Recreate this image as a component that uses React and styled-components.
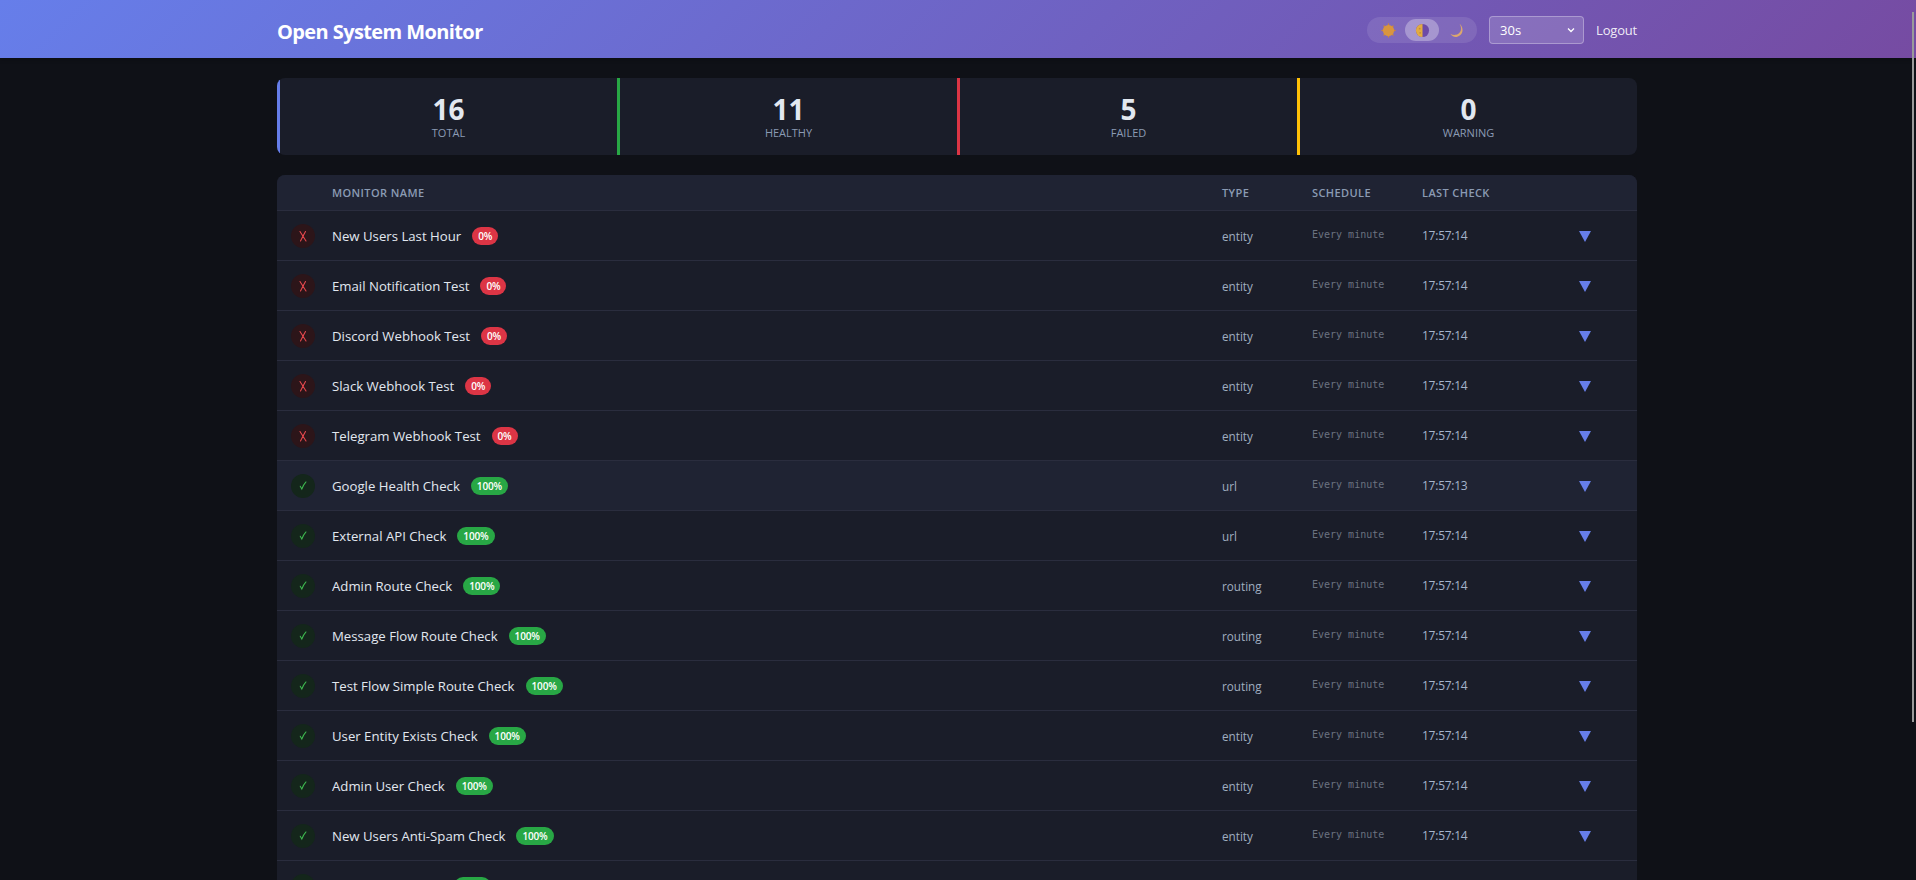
import React from 'react';
import styled, { createGlobalStyle } from 'styled-components';

const GlobalStyle = createGlobalStyle`
  html, body {
    margin: 0;
    padding: 0;
    height: 880px;
    overflow: hidden;
    background: #0f1117;
  }
  body {
    font-family: "Open Sans", "Noto Sans", "Liberation Sans", sans-serif;
    color: #e2e8f0;
  }
`;

const Header = styled.header`
  height: 58px;
  background: linear-gradient(135deg, #667eea 0%, #764ba2 100%);
  box-shadow: 0 2px 4px rgba(0, 0, 0, 0.2);
`;

const HeaderInner = styled.div`
  height: 100%;
  margin: 0 279px 0 277px;
  display: flex;
  align-items: center;
  justify-content: space-between;
`;

const Title = styled.h1`
  margin: 4px 0 0;
  font-size: 20px;
  font-weight: 700;
  letter-spacing: -0.6px;
  color: #fff;
`;

const HeaderControls = styled.div`
  display: flex;
  align-items: center;
  padding-top: 2px;
`;

const ThemeSwitch = styled.div`
  width: 110px;
  height: 26px;
  border-radius: 13px;
  background: rgba(255, 255, 255, 0.1);
  display: flex;
  align-items: center;
  justify-content: space-between;
  padding: 0 4px;
  box-sizing: border-box;
  margin-right: 12px;
`;

const ThemeOption = styled.span`
  width: 35px;
  height: 22px;
  border-radius: 11px;
  display: flex;
  align-items: center;
  justify-content: center;
  background: ${(p) => (p.$active ? 'rgba(255, 255, 255, 0.3)' : 'transparent')};
`;

const RefreshSelect = styled.div`
  width: 95px;
  height: 28px;
  box-sizing: border-box;
  border: 1px solid rgba(255, 255, 255, 0.3);
  border-radius: 4px;
  background: rgba(255, 255, 255, 0.15);
  display: flex;
  align-items: center;
  justify-content: space-between;
  padding: 0 7px 0 10px;
  font-size: 13px;
  color: #fff;
  margin-right: 12px;
`;

const LogoutLink = styled.span`
  font-size: 13px;
  letter-spacing: -0.2px;
  color: rgba(255, 255, 255, 0.9);
`;

const Main = styled.main`
  margin: 0 279px 0 277px;
  padding-top: 20px;
`;

const StatsBar = styled.section`
  height: 77px;
  display: grid;
  grid-template-columns: repeat(4, 1fr);
  background: #1a1d29;
  border-radius: 8px;
  overflow: hidden;
  margin-bottom: 20px;
`;

const StatCard = styled.div`
  border-left: 3px solid ${(p) => p.$color};
  display: flex;
  flex-direction: column;
  align-items: center;
  justify-content: center;
`;

const StatValue = styled.div`
  font-size: 28px;
  font-weight: 700;
  line-height: 32px;
  color: #e2e8f0;
`;

const StatLabel = styled.div`
  font-size: 11px;
  line-height: 15px;
  color: #8b9bb4;
  text-transform: uppercase;
`;

const Table = styled.section`
  background: #1a1d29;
  border-radius: 8px 8px 0 0;
  overflow: hidden;
`;

const columns = '55px 890px 90px 110px 1fr';

const TableHead = styled.div`
  height: 35px;
  display: grid;
  grid-template-columns: ${columns};
  align-items: center;
  background: #1f2333;
  border-bottom: 1px solid #2a2d3e;
  font-size: 11px;
  font-weight: 600;
  color: #8b9bb4;
  text-transform: uppercase;
  letter-spacing: 0.4px;
`;

const Row = styled.div`
  height: 49px;
  display: grid;
  grid-template-columns: ${columns};
  align-items: center;
  background: ${(p) => (p.$hover ? '#1f2333' : 'transparent')};
  border-bottom: 1px solid #2a2d3e;
  font-size: 13.2px;
`;

const StatusIcon = styled.span`
  margin-left: 14px;
  width: 24px;
  height: 24px;
  border-radius: 50%;
  display: flex;
  align-items: center;
  justify-content: center;
  color: ${(p) => (p.$ok ? '#3fb950' : '#e5484d')};
  background: ${(p) => (p.$ok ? '#14261b' : '#2c1519')};
`;

const NameCell = styled.div`
  display: flex;
  align-items: center;
  gap: 11px;
  color: #e2e8f0;
`;

const Badge = styled.span`
  height: 18px;
  padding: 0 6px;
  border-radius: 9px;
  display: inline-flex;
  align-items: center;
  font-size: 10px;
  font-weight: 600;
  letter-spacing: -0.15px;
  color: #fff;
  background: ${(p) => (p.$ok ? '#28a745' : '#dc3545')};
`;

const TypeCell = styled.div`
  font-size: 11.7px;
  color: #a0aec0;
`;

const ScheduleCell = styled.div`
  font-family: "DejaVu Sans Mono", "Liberation Mono", monospace;
  font-size: 10px;
  color: #6b7280;
  margin-top: -2px;
`;

const CheckCell = styled.div`
  position: relative;
  font-size: 12px;
  letter-spacing: -0.25px;
  color: #a5b4cc;
`;

const ExpandArrow = styled.span`
  position: absolute;
  left: 157px;
  top: 4px;
  width: 0;
  height: 0;
  border-left: 6px solid transparent;
  border-right: 6px solid transparent;
  border-top: 11px solid #667eea;
`;

const ScrollThumb = styled.div`
  position: fixed;
  top: 12px;
  right: 2px;
  width: 2px;
  height: 710px;
  background: #9a9a9a;
`;

const CrossIcon = () => (
  <svg width="12" height="14" viewBox="0 0 12 14">
    <path d="M3 2.500c2 3 4 6.500 6 9.500M8.500 2.500C6.800 5.500 5 9 3.500 12" fill="none" stroke="currentColor" strokeWidth="1.1" strokeLinecap="round" />
  </svg>
);

const CheckIcon = () => (
  <svg width="10" height="11" viewBox="0 0 12 14">
    <path d="M2.500 8 4.500 11.500C5.800 8 7.500 5 9.800 2.500" fill="none" stroke="currentColor" strokeWidth="1.3" strokeLinecap="round" />
  </svg>
);

const SunIcon = () => (
  <svg width="15" height="15" viewBox="0 0 16 16">
    <g stroke="#c9853c" strokeWidth="1.4" strokeLinecap="round">
      {[0, 45, 90, 135, 180, 225, 270, 315].map((a) => (
        <line key={a} x1="8" y1="1" x2="8" y2="3" transform={`rotate(${a} 8 8)`} />
      ))}
    </g>
    <circle cx="8" cy="8" r="6" fill="#d9953f" />
  </svg>
);

const HalfMoonIcon = () => (
  <svg width="15" height="15" viewBox="0 0 16 16">
    <circle cx="8" cy="8" r="7" fill="#6d4aa8" />
    <path d="M8 1a7 7 0 0 0 0 14z" fill="#e2ab42" />
    <circle cx="5" cy="6" r="1" fill="#c58d33" />
    <circle cx="5.500" cy="10.500" r="0.9" fill="#c58d33" />
  </svg>
);

const CrescentIcon = () => (
  <svg width="15" height="15" viewBox="0 0 16 16">
    <path d="M11.500 1.200c3 4.600 1 10.600-4.600 11.400-2 .3-3.900-.2-5.400-1.200 1.200 2.400 3.800 3.800 6.600 3.400 4.400-.6 7-4.400 6.200-8.600-.4-2.200-1.300-3.800-2.800-5z" fill="#dca76d" />
  </svg>
);

const Chevron = () => (
  <svg width="10" height="10" viewBox="0 0 10 10">
    <path d="M2 3.500 5 6.500 8 3.500" fill="none" stroke="#fff" strokeWidth="1.3" />
  </svg>
);

const stats = [
  { value: 16, label: 'Total', color: '#667eea' },
  { value: 11, label: 'Healthy', color: '#28a745' },
  { value: 5, label: 'Failed', color: '#dc3545' },
  { value: 0, label: 'Warning', color: '#ffc107' },
];

const monitors = [
  { name: 'New Users Last Hour', type: 'entity', time: '17:57:14' },
  { name: 'Email Notification Test', type: 'entity', time: '17:57:14' },
  { name: 'Discord Webhook Test', type: 'entity', time: '17:57:14' },
  { name: 'Slack Webhook Test', type: 'entity', time: '17:57:14' },
  { name: 'Telegram Webhook Test', type: 'entity', time: '17:57:14' },
  { name: 'Google Health Check', type: 'url', time: '17:57:13', ok: true, hover: true },
  { name: 'External API Check', type: 'url', time: '17:57:14', ok: true },
  { name: 'Admin Route Check', type: 'routing', time: '17:57:14', ok: true },
  { name: 'Message Flow Route Check', type: 'routing', time: '17:57:14', ok: true },
  { name: 'Test Flow Simple Route Check', type: 'routing', time: '17:57:14', ok: true },
  { name: 'User Entity Exists Check', type: 'entity', time: '17:57:14', ok: true },
  { name: 'Admin User Check', type: 'entity', time: '17:57:14', ok: true },
  { name: 'New Users Anti-Spam Check', type: 'entity', time: '17:57:14', ok: true },
  { name: 'Flow Status Check', type: 'entity', time: '17:57:14', ok: true },
];

function App() {
  return (
    <>
      <GlobalStyle />
      <Header>
        <HeaderInner>
          <Title>Open System Monitor</Title>
          <HeaderControls>
            <ThemeSwitch>
              <ThemeOption><SunIcon /></ThemeOption>
              <ThemeOption $active><HalfMoonIcon /></ThemeOption>
              <ThemeOption><CrescentIcon /></ThemeOption>
            </ThemeSwitch>
            <RefreshSelect>30s<Chevron /></RefreshSelect>
            <LogoutLink>Logout</LogoutLink>
          </HeaderControls>
        </HeaderInner>
      </Header>
      <Main>
        <StatsBar>
          {stats.map((stat) => (
            <StatCard key={stat.label} $color={stat.color}>
              <StatValue>{stat.value}</StatValue>
              <StatLabel>{stat.label}</StatLabel>
            </StatCard>
          ))}
        </StatsBar>
        <Table>
          <TableHead>
            <span />
            <span>Monitor Name</span>
            <span>Type</span>
            <span>Schedule</span>
            <span>Last Check</span>
          </TableHead>
          {monitors.map((monitor) => (
            <Row key={monitor.name} $hover={monitor.hover}>
              <StatusIcon $ok={monitor.ok}>{monitor.ok ? <CheckIcon /> : <CrossIcon />}</StatusIcon>
              <NameCell>
                {monitor.name}
                <Badge $ok={monitor.ok}>{monitor.ok ? '100%' : '0%'}</Badge>
              </NameCell>
              <TypeCell>{monitor.type}</TypeCell>
              <ScheduleCell>Every minute</ScheduleCell>
              <CheckCell>
                {monitor.time}
                <ExpandArrow />
              </CheckCell>
            </Row>
          ))}
        </Table>
      </Main>
      <ScrollThumb />
    </>
  );
}

export default App;
